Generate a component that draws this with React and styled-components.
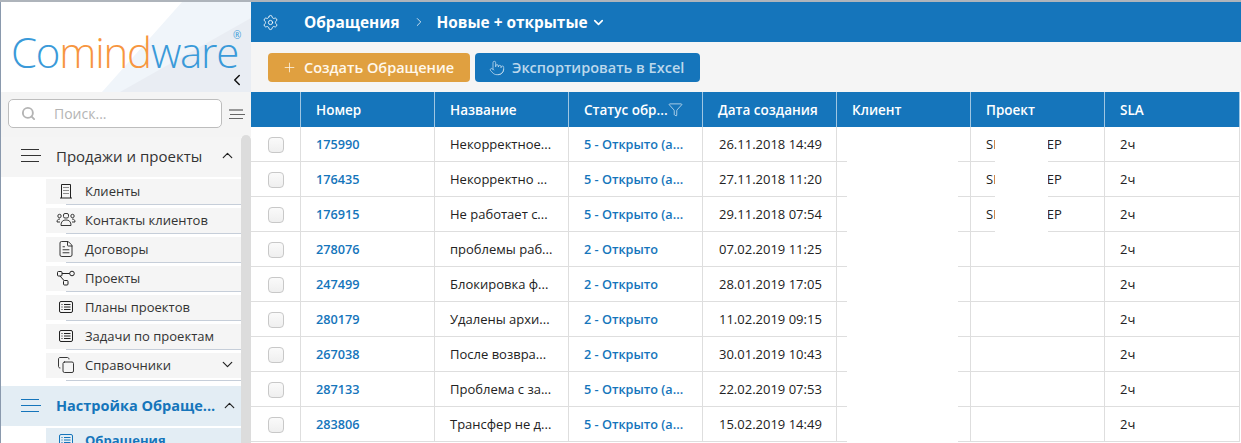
import styled, { createGlobalStyle } from "styled-components"
import { Settings, ChevronRight, ChevronDown, ChevronUp, ChevronLeft, Plus, Pointer, Filter, Search, FileText, Copy } from "lucide-react"

const BLUE = "#1575bb"

const GlobalStyle = createGlobalStyle`
  html, body { margin: 0; padding: 0; background: #fff; }
  body { font-family: "Open Sans", "Liberation Sans", sans-serif; overflow: hidden; }
  * { box-sizing: border-box; }
`
const Page = styled.div`
  width: 1241px;
  height: 443px;
  overflow: hidden;
  display: flex;
  border-top: 2px solid #aeb4bb;
`
const Sidebar = styled.aside`
  width: 251px;
  flex: none;
  position: relative;
  border-left: 1px solid #8a99ad;
  background: #fff;
`
const LogoArea = styled.div`
  height: 90px;
  position: relative;
  overflow: hidden;
  background: #fff;
  &::before {
    content: "";
    position: absolute;
    inset: 0;
    background: #f0f5fa;
    clip-path: polygon(181px 0, 250px 0, 250px 90px, 101px 90px);
  }
  &::after {
    content: "";
    position: absolute;
    inset: 0;
    background: #e9edf3;
    clip-path: polygon(250px 16px, 250px 90px, 119px 90px);
  }
`
const Logo = styled.div`
  position: absolute;
  z-index: 1;
  left: 10px;
  top: 22px;
  font-size: 42px;
  line-height: 56px;
  font-weight: 300;
  letter-spacing: -1.2px;
  color: #3a9ad9;
  white-space: nowrap;
`
const LogoAccent = styled.span`
  color: #f7963f;
`
const Registered = styled.span`
  position: absolute;
  z-index: 1;
  left: 232px;
  top: 27px;
  font-size: 10px;
  line-height: 12px;
  color: #3a9ad9;
`
const Collapse = styled.span`
  position: absolute;
  z-index: 1;
  left: 227px;
  top: 69px;
  display: flex;
  color: #111;
`
const SearchRow = styled.div`
  height: 45px;
  background: #f4f4f4;
  display: flex;
  align-items: flex-start;
  padding: 7px 0 0 7px;
`
const SearchBox = styled.div`
  width: 214px;
  height: 29px;
  background: #fff;
  border: 1px solid #bdbdbd;
  border-radius: 5px;
  display: flex;
  align-items: center;
  padding-left: 12px;
  gap: 18px;
  color: #b4b4b4;
  font-size: 14px;
`
const MiniBurger = styled.div`
  margin: 10px 0 0 7px;
  width: 16px;
  display: flex;
  flex-direction: column;
  gap: 3px;
  & > i { display: block; height: 1px; background: #666; }
  & > i:first-child { width: 14px; height: 2px; background: #999; }
  & > i:nth-child(2) { margin-left: 1px; width: 15px; }
  & > i:last-child { width: 14px; }
`
const Thumb = styled.div`
  position: absolute;
  left: 240px;
  top: 133px;
  bottom: 0;
  width: 10px;
  background: #dcdcdc;
  border-radius: 5px 5px 0 0;
`
const Menu = styled.nav`
  width: 240px;
`
const GroupHeader = styled.div`
  height: 40px;
  display: flex;
  align-items: center;
  background: ${p => (p.$active ? "#e3edf4" : "#f5f5f5")};
  color: ${p => (p.$active ? BLUE : "#333")};
  font-size: ${p => (p.$active ? 14.5 : 15)}px;
  font-weight: ${p => (p.$active ? 700 : 400)};
  padding: 0 0 ${p => (p.$active ? 1 : 3)}px 20px;
  margin-bottom: 2px;
`
const Burger = styled.div`
  width: 20px;
  flex: none;
  margin-right: 15px;
  display: flex;
  flex-direction: column;
  gap: 5px;
  & > i { display: block; height: 1px; background: currentColor; width: 18px; }
  & > i:nth-child(2) { width: 20px; }
`
const GroupTitle = styled.span`
  flex: 1;
  white-space: nowrap;
`
const Arrow = styled.span`
  width: 28px;
  flex: none;
  display: flex;
  padding-left: 6px;
  color: #222;
`
const ItemRow = styled.div`
  margin-left: 45px;
  height: 25px;
  display: flex;
  align-items: center;
  padding-bottom: 2px;
  background: ${p => (p.$active ? "#e3edf4" : "#f5f5f5")};
  color: ${p => (p.$active ? BLUE : "#333")};
  font-weight: ${p => (p.$active ? 700 : 400)};
  font-size: 13px;
  white-space: nowrap;
`
const ItemIcon = styled.span`
  width: 39px;
  flex: none;
  display: flex;
  justify-content: center;
  color: ${p => (p.$active ? BLUE : "#222")};
`
const ItemLabel = styled.span`
  flex: 1;
`
const ItemLine = styled.div`
  margin: ${p => (p.$last ? "2px 0 5px 65px" : "0 0 3px 65px")};
  height: 1px;
  background: #c6ced9;
`
const Main = styled.main`
  flex: 1;
  min-width: 0;
  display: flex;
  flex-direction: column;
`
const TopBar = styled.header`
  height: 40px;
  flex: none;
  background: ${BLUE};
  color: #fff;
  display: flex;
  align-items: center;
  padding-left: 11px;
  font-size: 15.4px;
  font-weight: 700;
`
const Crumb = styled.span`
  white-space: nowrap;
`
const Separator = styled.span`
  display: flex;
  margin: 0 11px 0 12px;
`
const GearIcon = styled.span`
  display: flex;
  margin-right: 25px;
`
const Dropdown = styled.span`
  display: flex;
  margin-left: 3px;
`
const Toolbar = styled.div`
  height: 50px;
  flex: none;
  background: #f5f5f5;
  display: flex;
  align-items: flex-start;
  padding: 11px 0 0 17px;
  gap: 5px;
`
const Button = styled.button`
  height: 29px;
  width: ${p => p.$width}px;
  border: none;
  border-radius: 4px;
  background: ${p => p.$bg};
  color: ${p => p.$fg};
  font: 600 14.5px "Open Sans", sans-serif;
  display: flex;
  align-items: center;
  padding: 0 0 0 14px;
  gap: 7px;
  white-space: nowrap;
`
const Table = styled.div`
  position: relative;
  flex: 1;
  overflow: hidden;
`
const Row = styled.div`
  display: grid;
  grid-template-columns: 50px repeat(6, 134px) 135px;
  height: 35px;
`
const HeadCell = styled.div`
  background: ${BLUE};
  color: #fff;
  border-right: 1px solid #9fc6e2;
  font-size: 13.5px;
  font-weight: 600;
  display: flex;
  align-items: center;
  padding-left: 15px;
  white-space: nowrap;
`
const Cell = styled.div`
  border-right: 1px solid #dedede;
  border-bottom: 1px solid #dedede;
  font-size: ${p => (p.$link ? 12.7 : 13)}px;
  color: ${p => (p.$link ? BLUE : "#222")};
  font-weight: ${p => (p.$link ? 600 : 400)};
  display: flex;
  align-items: center;
  padding-left: ${p => p.$pad || 15}px;
  white-space: nowrap;
  overflow: hidden;
`
const CheckCell = styled(Cell)`
  padding: 2px 0 0 17px;
`
const Check = styled.span`
  width: 16px;
  height: 16px;
  border: 1px solid #c8c8c8;
  border-radius: 4px;
  background: linear-gradient(#fafafa, #efefef);
`
const ProjectGap = styled.span`
  width: 50px;
  flex: none;
`
const Blank = styled.div`
  position: absolute;
  left: ${p => p.$left}px;
  width: ${p => p.$width}px;
  top: 35px;
  height: ${p => p.$height};
  background: #fff;
`

const ListIcon = () => (
  <svg width="16" height="14" viewBox="0 0 16 14" fill="none" stroke="currentColor">
    <rect x="1.5" y="1.5" width="13" height="11" rx="1.5" />
    <path d="M3.5 4.5h1M6 4.5h6.5M3.5 7h1M6 7h6.5M3.5 9.5h1M6 9.5h6.5" />
  </svg>
)
const BuildingIcon = () => (
  <svg width="16" height="16" viewBox="0 0 16 16" fill="none" stroke="currentColor">
    <path d="M3.5 15V1.5h9V15M2 15h12M6 4v1M8 4v1M10 4v1M6 7v1M8 7v1M10 7v1M6 10v1M8 10v1M10 10v1" />
  </svg>
)
const ContactsIcon = () => (
  <svg width="20" height="16" viewBox="0 0 20 16" fill="none" stroke="currentColor" strokeWidth="0.9">
    <rect x="7.5" y="1.5" width="5" height="4.5" rx="1.5" />
    <circle cx="3.5" cy="4" r="1.7" />
    <circle cx="16.5" cy="4" r="1.7" />
    <path d="M1 10c0-2 1-3 3-3M19 10c0-2-1-3-3-3M5 13.5c0-4 2-5.5 5-5.5s5 1.500 5 5.500zM1 10h3M16 10h3" />
  </svg>
)
const FlowIcon = () => (
  <svg width="20" height="16" viewBox="0 0 20 16" fill="none" stroke="currentColor">
    <rect x="1.500" y="1.500" width="4.500" height="4.500" rx="1" />
    <circle cx="16" cy="3.500" r="2.300" />
    <rect x="7.500" y="10.500" width="4.500" height="4.500" rx="1" />
    <path d="M6 3.500h7.700M4 6l4 4.500" />
  </svg>
)

const menuItems = [
  { label: "Клиенты", icon: <BuildingIcon /> },
  { label: "Контакты клиентов", icon: <ContactsIcon /> },
  { label: "Договоры", icon: <FileText size={18} strokeWidth={1.2} /> },
  { label: "Проекты", icon: <FlowIcon /> },
  { label: "Планы проектов", icon: <ListIcon /> },
  { label: "Задачи по проектам", icon: <ListIcon /> },
  { label: "Справочники", icon: <Copy size={18} strokeWidth={1.2} />, more: true },
]

const columns = ["Номер", "Название", "Статус обр...", "Дата создания", "Клиент", "Проект", "SLA"]

const rows = [
  ["175990", "Некорректное...", "5 - Открыто (а...", "26.11.2018 14:49", true],
  ["176435", "Некорректно ...", "5 - Открыто (а...", "27.11.2018 11:20", true],
  ["176915", "Не работает с...", "5 - Открыто (а...", "29.11.2018 07:54", true],
  ["278076", "проблемы раб...", "2 - Открыто", "07.02.2019 11:25"],
  ["247499", "Блокировка ф...", "2 - Открыто", "28.01.2019 17:05"],
  ["280179", "Удалены архи...", "2 - Открыто", "11.02.2019 09:15"],
  ["267038", "После возвра...", "2 - Открыто", "30.01.2019 10:43"],
  ["287133", "Проблема с за...", "5 - Открыто (а...", "22.02.2019 07:53"],
  ["283806", "Трансфер не д...", "5 - Открыто (а...", "15.02.2019 14:49"],
]

const App = () => {
  return (
    <Page>
      <GlobalStyle />
      <Sidebar>
        <LogoArea>
          <Logo>Co<LogoAccent>mind</LogoAccent>ware</Logo>
          <Registered>®</Registered>
          <Collapse><ChevronLeft size={18} strokeWidth={2} /></Collapse>
        </LogoArea>
        <SearchRow>
          <SearchBox>
            <Search size={15} strokeWidth={3} />
            Поиск...
          </SearchBox>
          <MiniBurger><i /><i /><i /></MiniBurger>
        </SearchRow>
        <Menu>
          <GroupHeader>
            <Burger><i /><i /><i /></Burger>
            <GroupTitle>Продажи и проекты</GroupTitle>
            <Arrow><ChevronUp size={17} strokeWidth={1.7} /></Arrow>
          </GroupHeader>
          {menuItems.map((item, i) => (
            <div key={item.label}>
              <ItemRow>
                <ItemIcon>{item.icon}</ItemIcon>
                <ItemLabel>{item.label}</ItemLabel>
                {item.more && <Arrow><ChevronDown size={17} strokeWidth={1.7} /></Arrow>}
              </ItemRow>
              <ItemLine $last={i === menuItems.length - 1} />
            </div>
          ))}
          <GroupHeader $active>
            <Burger><i /><i /><i /></Burger>
            <GroupTitle>Настройка Обраще...</GroupTitle>
            <Arrow><ChevronUp size={17} strokeWidth={1.7} /></Arrow>
          </GroupHeader>
          <ItemRow $active>
            <ItemIcon $active><ListIcon /></ItemIcon>
            <ItemLabel>Обращения</ItemLabel>
          </ItemRow>
        </Menu>
        <Thumb />
      </Sidebar>
      <Main>
        <TopBar>
          <GearIcon><Settings size={17} strokeWidth={1.2} /></GearIcon>
          <Crumb>Обращения</Crumb>
          <Separator><ChevronRight size={14} strokeWidth={1.3} /></Separator>
          <Crumb>Новые + открытые</Crumb>
          <Dropdown><ChevronDown size={15} strokeWidth={2.6} /></Dropdown>
        </TopBar>
        <Toolbar>
          <Button $width={202} $bg="#e0a040" $fg="#fff8ec">
            <Plus size={15} strokeWidth={1.2} />
            Создать Обращение
          </Button>
          <Button $width={225} $bg={BLUE} $fg="#bcd8ec">
            <Pointer size={16} strokeWidth={1.2} />
            Экспортировать в Excel
          </Button>
        </Toolbar>
        <Table>
          <Row>
            <HeadCell />
            {columns.map(c => (
              <HeadCell key={c}>
                {c}
                {c === "Статус обр..." && <Filter size={15} strokeWidth={1} />}
              </HeadCell>
            ))}
          </Row>
          {rows.map(r => (
            <Row key={r[0]}>
              <CheckCell><Check /></CheckCell>
              <Cell $link>{r[0]}</Cell>
              <Cell>{r[1]}</Cell>
              <Cell $link>{r[2]}</Cell>
              <Cell $pad={16}>{r[3]}</Cell>
              <Cell />
              <Cell>{r[4] && <>SI<ProjectGap />EP</>}</Cell>
              <Cell>2ч</Cell>
            </Row>
          ))}
          <Blank $left={596} $width={111} $height="316px" />
          <Blank $left={744} $width={53} $height="105px" />
        </Table>
      </Main>
    </Page>
  )
}

export default App
